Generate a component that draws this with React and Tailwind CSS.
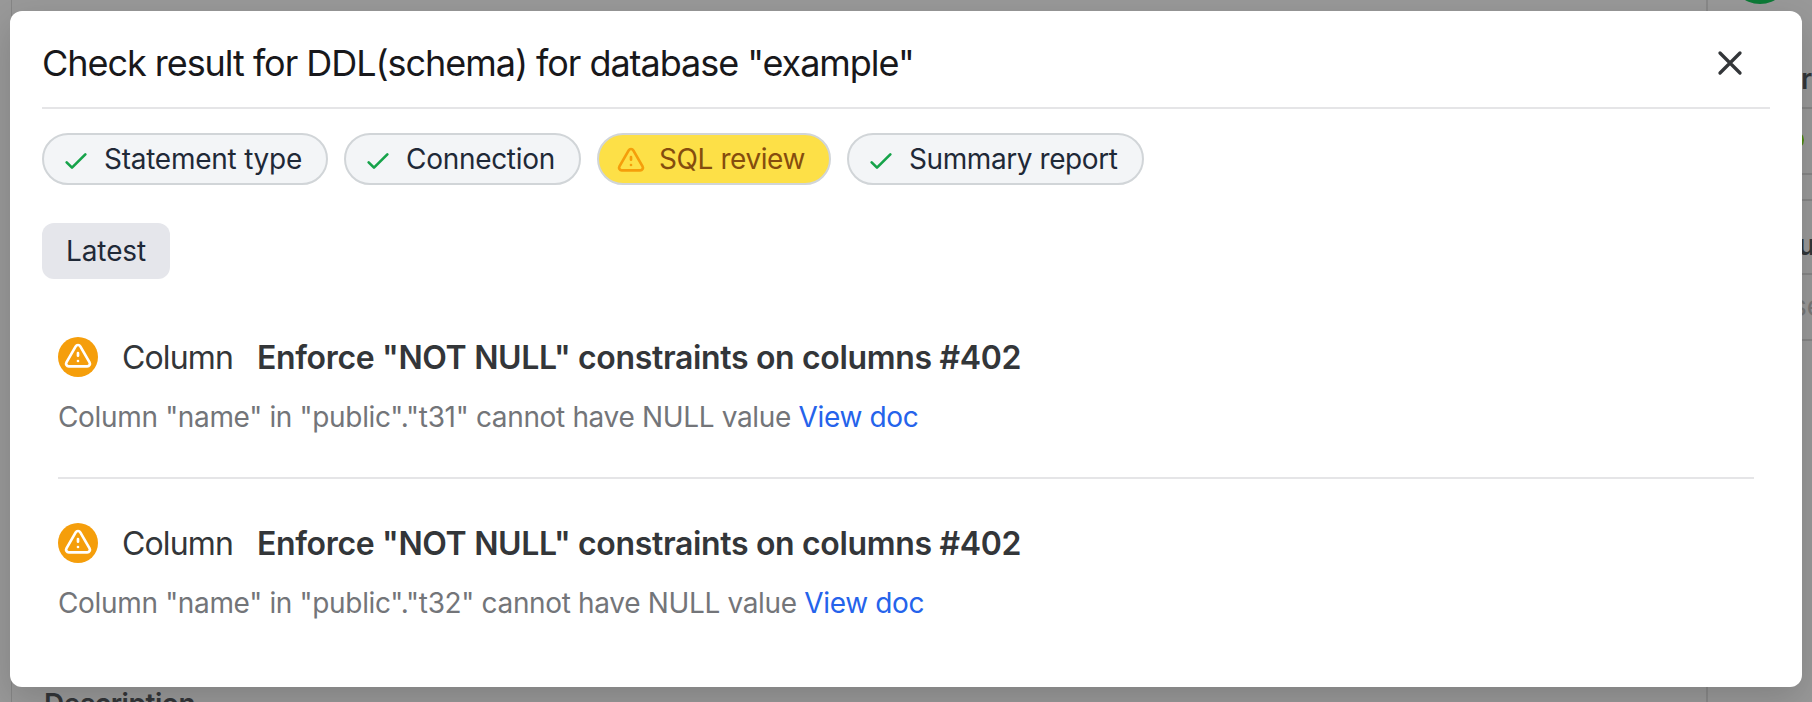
const WARNING_PATH =
  "M12 9v2m0 4h.01m-6.938 4h13.856c1.54 0 2.502-1.667 1.732-3L13.732 4c-.77-1.333-2.694-1.333-3.464 0L3.34 16c-.77 1.333.192 3 1.732 3z";

function Icon({ d, className }) {
  return (
    <svg
      viewBox="0 0 24 24"
      fill="none"
      stroke="currentColor"
      strokeWidth="2"
      strokeLinecap="round"
      strokeLinejoin="round"
      className={className}
    >
      <path d={d} />
    </svg>
  );
}

const checks = [
  { label: "Statement type", width: "w-[286px]", tracking: "tracking-[-0.25px]", ok: true },
  { label: "Connection", width: "w-[237px]", tracking: "tracking-[-0.3px]", ok: true },
  { label: "SQL review", width: "w-[234px]", tracking: "tracking-[-0.42px]", ok: false },
  { label: "Summary report", width: "w-[297px]", tracking: "tracking-[-0.42px]", ok: true },
];

function Pill({ label, width, tracking, ok }) {
  return (
    <button
      className={`flex h-[52px] items-center gap-3 whitespace-nowrap rounded-full border-2 border-[#d1d5d8] pl-4 ${width} ${
        ok ? "bg-[#f3f5f7] text-[#1f2937]" : "bg-[#fde047] text-[#854d0e]"
      }`}
    >
      <Icon
        d={ok ? "M5 13l4 4L19 7" : WARNING_PATH}
        className={`mt-1 size-8 shrink-0 ${ok ? "text-[#16a34a]" : "text-[#f59e0b]"}`}
      />
      <span className={`text-[28px] leading-10 ${tracking}`}>{label}</span>
    </button>
  );
}

function Result({ table }) {
  return (
    <div className="flex h-[184px] flex-col gap-5 pt-11">
      <div className="flex h-10 items-center gap-6 text-[32px] text-[#333639]">
        <span className="flex size-10 items-center justify-center rounded-full bg-[#f59e0b] text-white">
          <Icon d={WARNING_PATH} className="size-8" />
        </span>
        <span className="w-[111px] pt-0.5 tracking-[-0.85px]">Column</span>
        <span className="whitespace-nowrap pt-0.5 font-semibold tracking-[-0.34px]">
          Enforce "NOT NULL" constraints on columns #402
        </span>
      </div>
      <p className="whitespace-nowrap text-[28px] leading-10 tracking-[-0.34px] text-[#737579]">
        Column "name" in "public"."{table}" cannot have NULL value <a className="text-[#2563eb]">View doc</a>
      </p>
    </div>
  );
}

function Backdrop() {
  return (
    <div className="absolute inset-0 flex bg-[#999999] text-[28px] font-semibold leading-none text-[#333639]">
      <div className="w-3 border-r border-[#868686]" />
      <main className="flex flex-1 flex-col justify-end pl-8">
        <span className="h-3 tracking-[-0.45px]">Description</span>
      </main>
      <aside className="flex w-[106px] flex-col border-l-2 border-[#898989]">
        <div className="flex h-[109px] items-start border-b-2 border-[#868686]">
          <div className="ml-[22px] h-1 w-[60px] overflow-hidden">
            <div className="-mt-14 size-[60px] rounded-full bg-[#0d7a37]" />
          </div>
          <span className="ml-[14px] pt-[65px]">r</span>
        </div>
        <div className="flex h-[66px] items-start border-b-2 border-[#868686] pl-[76px] pt-[21px]">
          <div className="size-5 rounded-full bg-[#4d8a0f]" />
        </div>
        <div className="h-[26px] border-b-2 border-[#868686]" />
        <div className="h-[74px] border-b-2 border-[#868686] pl-[90px] pt-[30px]">u</div>
        <div className="h-[66px] border-b-2 border-[#868686] pl-[84px] pt-[17px] font-normal text-[#777777]">se</div>
      </aside>
    </div>
  );
}

export default function App() {
  return (
    <div className="relative h-[702px] w-[1812px] overflow-hidden font-[Inter,sans-serif]">
      <Backdrop />
      <div className="relative px-[10px] pt-[11px]">
        <section className="h-[676px] rounded-xl bg-white px-8 shadow-[0_12px_36px_rgba(0,0,0,0.16)]">
          <header className="flex h-[98px] items-center justify-between border-b-2 border-[#e5e5e7] pr-5">
            <h1 className="mt-2 whitespace-nowrap text-[36px] tracking-[-1.04px] text-[#18181b]">
              Check result for DDL(schema) for database "example"
            </h1>
            <Icon d="M6 6l12 12M18 6L6 18" className="mt-2 size-10 text-[#333639]" />
          </header>
          <div className="flex gap-4 pt-6">
            {checks.map((c) => (
              <Pill key={c.label} {...c} />
            ))}
          </div>
          <div className="flex pt-[38px] pb-[14px]">
            <button className="flex h-14 w-32 items-center rounded-xl bg-[#e5e6eb] px-6 text-[28px] tracking-[-0.1px] text-[#1f2937]">
              Latest
            </button>
          </div>
          <div className="px-4">
            <Result table="t31" />
            <div className="h-[2px] bg-[#e5e5e7]" />
            <Result table="t32" />
          </div>
        </section>
      </div>
    </div>
  );
}
